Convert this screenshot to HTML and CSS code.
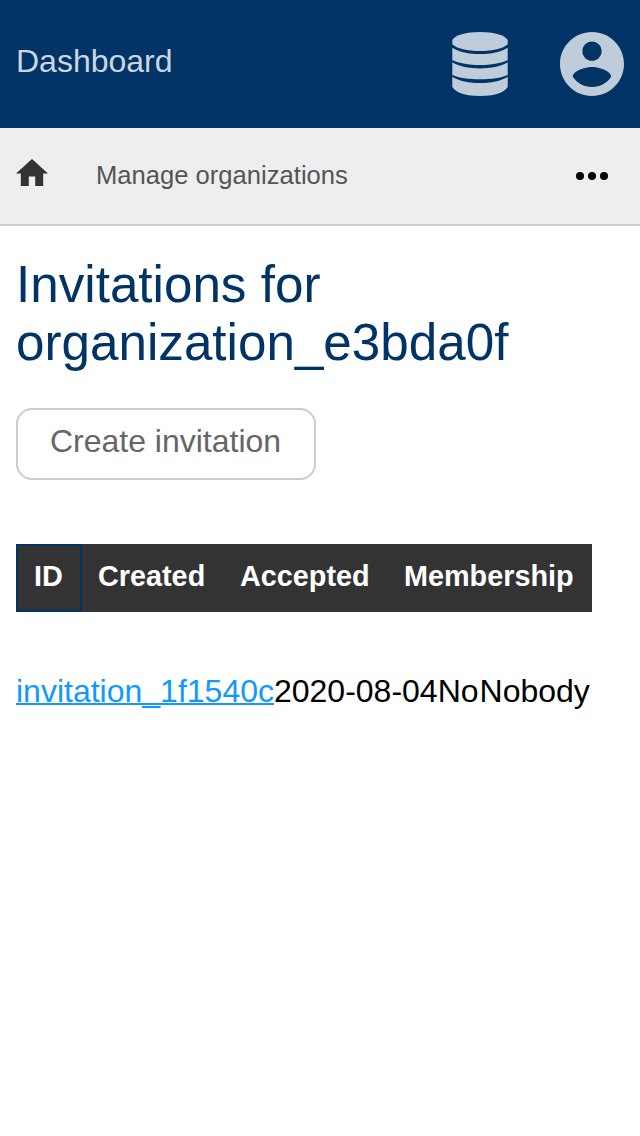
FILE: index.html
```html
<!DOCTYPE html>
<html lang="en">
<head>
<meta charset="utf-8">
<title>Invitations</title>
<link rel="stylesheet" href="styles.css">
</head>
<body>
<header class="topbar">
  <a class="brand">Dashboard</a>
  <nav class="actions">
    <svg class="icon-db" viewBox="0 0 56 64">
      <path d="M.3 8C3 3 14 0 28 0S53 3 55.700 8V12.200C51 16.500 41 19 28 19S5 16.500 .3 12.200Z"/>
      <path d="M.3 15.700C7 20 17 22 28 22S49 20 55.700 15.700V28C49 31.500 39 33 28 33S7 31.500 .3 28Z"/>
      <path d="M.3 30.300C7 34.600 17 36.500 28 36.500S49 34.600 55.700 30.300V43C49 46 39 47.300 28 47.300S7 46 .3 43Z"/>
      <path d="M.3 44.700C7 49 17 51 28 51S49 49 55.700 44.700V55C52 61 42 64 28 64S4 61 .3 55Z"/>
    </svg>
    <svg class="icon-user" viewBox="2 2 20 20"><path d="M12 2C6.480 2 2 6.480 2 12s4.480 10 10 10 10-4.480 10-10S17.520 2 12 2zm0 3c1.660 0 3 1.340 3 3s-1.340 3-3 3-3-1.340-3-3 1.340-3 3-3zm0 14.200c-2.500 0-4.710-1.280-6-3.220.03-1.990 4-3.080 6-3.080 1.990 0 5.970 1.090 6 3.080-1.290 1.940-3.500 3.220-6 3.220z"/></svg>
  </nav>
</header>
<nav class="crumbs">
  <svg class="icon-home" viewBox="2 3 20 17"><path d="M10 20v-6h4v6h5v-8h3L12 3 2 12h3v8z"/></svg>
  <a class="crumb">Manage organizations</a>
  <svg class="icon-more" viewBox="0 0 32 8"><circle cx="4" cy="4" r="4"/><circle cx="16" cy="4" r="4"/><circle cx="28" cy="4" r="4"/></svg>
</nav>
<main class="content">
  <h1 class="title">Invitations for organization_e3bda0f</h1>
  <button class="create">Create invitation</button>
  <div class="table-head">
    <div class="th th-id">ID</div>
    <div class="th th-created">Created</div>
    <div class="th th-accepted">Accepted</div>
    <div class="th">Membership</div>
  </div>
  <div class="row"><a class="link" href="#">invitation_1f1540c</a><span>2020-08-04</span><span class="accepted">No</span><span>Nobody</span></div>
</main>
</body>
</html>
```
FILE: styles.css
```css
* { box-sizing: border-box; }
body {
  margin: 0;
  background: #fff;
  color: #000;
  font: 32px/36px "Liberation Sans", Arial, sans-serif;
}
.topbar {
  height: 128px;
  padding: 0 16px;
  display: flex;
  align-items: center;
  justify-content: space-between;
  background: #003366;
  color: #ccd6e0;
}
.brand { padding-bottom: 7px; }
.actions { display: flex; gap: 52px; }
.actions svg { fill: #bfccd9; display: block; }
.icon-db { width: 56px; height: 64px; }
.icon-user { width: 64px; height: 64px; }
.crumbs {
  height: 98px;
  padding: 0 32px 0 16px;
  display: flex;
  align-items: center;
  background: #eee;
  border-bottom: 2px solid #ccc;
}
.icon-home { width: 32px; height: 27.200px; margin: 0 48px 7px 0; fill: #333; }
.crumb { padding-bottom: 2px; font-size: 25.600px; color: #555; }
.icon-more { width: 32px; height: 8px; margin-left: auto; }
.content { padding: 30px 16px 0; }
.title {
  margin: 0 0 36px;
  font-size: 51.200px;
  line-height: 58px;
  font-weight: 400;
  color: #003366;
}
.create {
  display: block;
  width: 300px;
  height: 72px;
  padding: 0 1px 7px 0;
  border: 2px solid #ccc;
  border-radius: 16px;
  background: #fff;
  color: #666;
  font: inherit;
}
.table-head {
  display: flex;
  width: 576px;
  height: 68px;
  margin-top: 64px;
  background: #333;
  color: #fff;
  font-size: 28.800px;
  font-weight: 700;
}
.th { padding: 14px 18px 0; }
.th-id { width: 66px; border: 2px solid #003366; padding: 12px 16px 0; }
.th-created { width: 140px; padding-left: 16px; }
.th-accepted { width: 164px; }
.row { display: flex; margin-top: 61px; }
.accepted { margin-right: 1px; }
.link {
  color: #1199ff;
  text-decoration-thickness: 2px;
  text-decoration-skip-ink: none;
}
```
